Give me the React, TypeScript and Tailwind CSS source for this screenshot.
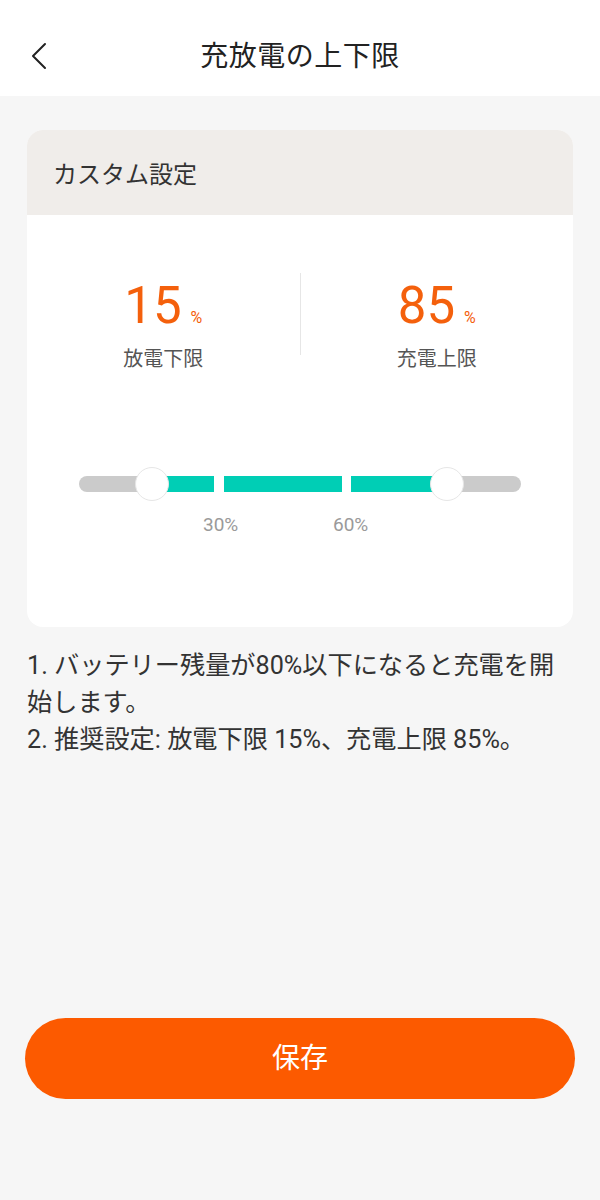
const font = { fontFamily: "Roboto, 'Noto Sans CJK JP', sans-serif" };

function BackIcon() {
  return (
    <svg className="absolute left-[30px] top-[42px]" width="18" height="28" viewBox="0 0 18 28" fill="none">
      <path d="M15 2 L3 14 L15 26" stroke="#222" strokeWidth="2" strokeLinecap="round" strokeLinejoin="round" />
    </svg>
  );
}

function Stat({ value, label }: { value: string; label: string }) {
  return (
    <div className="flex flex-col items-center">
      <div className="flex items-baseline text-[#f4600c]">
        <span className="text-[51px] leading-[60px]">{value}</span>
        <span className="ml-[9px] text-[16px]">%</span>
      </div>
      <p className="mt-[10px] text-[20px] leading-[26px] text-[#555]">{label}</p>
    </div>
  );
}

function RangeSlider() {
  // pixel positions along the 442px track
  const segments = [
    [72, 135],
    [145, 263],
    [272, 368],
  ];
  return (
    <div className="px-[52px]">
      <div className="relative h-[16px] rounded-full bg-[#cbcbcb]">
        {segments.map(([a, b]) => (
          <div key={a} className="absolute top-0 h-[16px] bg-[#00ceb5]" style={{ left: a, width: b - a }} />
        ))}
        <div className="absolute top-0 h-[16px] w-[10px] bg-white" style={{ left: 135 }} />
        <div className="absolute top-0 h-[16px] w-[9px] bg-white" style={{ left: 263 }} />
        <div className="absolute top-[-9px] left-[56px] h-[34px] w-[34px] rounded-full border border-[#e6e6e6] bg-white" />
        <div className="absolute top-[-9px] left-[351px] h-[34px] w-[34px] rounded-full border border-[#e6e6e6] bg-white" />
      </div>
      <div className="relative mt-[19px] h-[24px] text-[19px] text-[#9a9a9a]">
        <span className="absolute top-0 left-[124px]">30%</span>
        <span className="absolute top-0 left-[254px]">60%</span>
      </div>
    </div>
  );
}

export default function App() {
  return (
    <div className="flex min-h-[1200px] flex-col bg-[#f6f6f6] text-[#222]" style={font}>
      <header className="relative flex h-[96px] shrink-0 items-center justify-center bg-white pt-[18px]">
        <BackIcon />
        <h1 className="text-[28px] tracking-[0.5px]">充放電の上下限</h1>
      </header>

      <main className="px-[27px] pt-[34px]">
        <section className="overflow-hidden rounded-[16px] bg-white">
          <div className="flex h-[85px] items-center bg-[#f0edea] pl-[26px] pt-[4px]">
            <h2 className="text-[24px] text-[#333]">カスタム設定</h2>
          </div>
          <div className="pt-[61px] pb-[92px]">
            <div className="grid grid-cols-[1fr_1px_1fr] items-start">
              <Stat value="15" label="放電下限" />
              <div className="mt-[-3px] h-[82px] bg-[#e6e6e6]" />
              <Stat value="85" label="充電上限" />
            </div>
            <div className="mt-[104px]">
              <RangeSlider />
            </div>
          </div>
        </section>

        <div className="mt-[20px] pr-[14px] text-[25.2px] leading-[37px] text-[#333]">
          <p>1. バッテリー残量が80%以下になると充電を開始します。</p>
          <p>2. 推奨設定: 放電下限 15%、充電上限 85%。</p>
        </div>
      </main>

      <div className="mt-auto px-[25px] pb-[101px]">
        <button className="flex h-[81px] w-full items-center justify-center rounded-full bg-[#fc5a00] text-[28px] text-white">
          保存
        </button>
      </div>
    </div>
  );
}
